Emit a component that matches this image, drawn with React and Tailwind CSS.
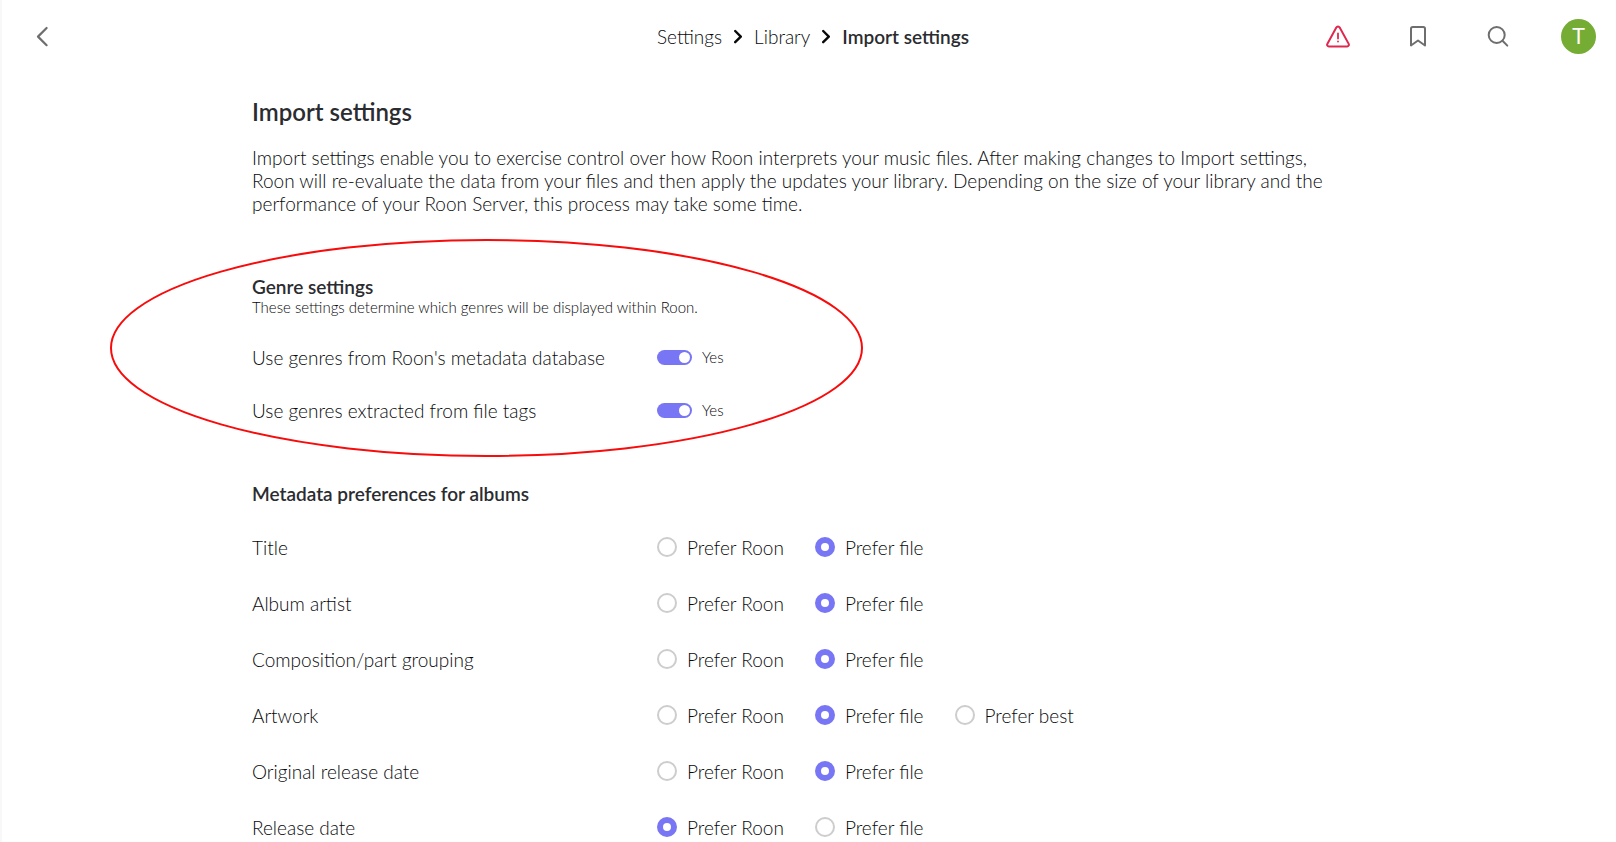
import { useState } from "react";

const ALBUM_FIELDS = [
  { id: "title", label: "Title", value: "file" },
  { id: "album-artist", label: "Album artist", value: "file" },
  { id: "grouping", label: "Composition/part grouping", value: "file" },
  { id: "artwork", label: "Artwork", value: "file", best: true },
  { id: "original-date", label: "Original release date", value: "file" },
  { id: "release-date", label: "Release date", value: "roon" },
];

function Chevron() {
  return (
    <svg className="h-4 w-2 shrink-0" viewBox="0 0 8 16" fill="none" stroke="currentColor" strokeWidth="2.4" strokeLinecap="round" strokeLinejoin="round" aria-hidden="true">
      <path d="M1.2 2 6.8 7.6 1.2 13.2" />
    </svg>
  );
}

function Header() {
  return (
    <header className="grid h-[73px] shrink-0 grid-cols-[1fr_auto_1fr] items-center pr-5 pl-7">
      <button type="button" aria-label="Back" className="flex size-7 items-center justify-center text-[#6e6e6e]">
        <svg className="size-7" viewBox="0 0 28 28" fill="none" stroke="currentColor" strokeWidth="2.2" strokeLinecap="round" strokeLinejoin="round" aria-hidden="true">
          <path d="M16.6 5 8 13.6l8.6 8.6" />
        </svg>
      </button>
      <nav aria-label="Breadcrumb" className="flex items-center gap-3 text-[19px] leading-6">
        <a href="#settings">Settings</a>
        <Chevron />
        <a href="#library">Library</a>
        <Chevron />
        <span aria-current="page" className="font-semibold text-[#2b2c30]">Import settings</span>
      </nav>
      <div className="flex items-center justify-end text-[#6e6e6e]">
        <button type="button" aria-label="Alerts" className="flex w-20 justify-center text-[#e0284f]">
          <svg className="size-6" viewBox="0 0 24 24" fill="none" stroke="currentColor" strokeWidth="2" strokeLinecap="round" strokeLinejoin="round" aria-hidden="true">
            <path d="M10.3 2.4 1.3 18.9a1.7 1.7 0 0 0 1.5 2.5h18.4a1.7 1.7 0 0 0 1.5-2.5L13.7 2.4a1.95 1.95 0 0 0-3.4 0Z" />
            <path d="M12 8.5v5M12 16.3v.2" strokeWidth="1.8" />
          </svg>
        </button>
        <button type="button" aria-label="Bookmarks" className="flex w-20 justify-center">
          <svg className="size-6" viewBox="0 0 24 24" fill="none" stroke="currentColor" strokeWidth="2" strokeLinecap="round" strokeLinejoin="round" aria-hidden="true">
            <path d="M5 20.5V3.8A1.8 1.8 0 0 1 6.8 2h10.4A1.8 1.8 0 0 1 19 3.8V20.5L12 15.5Z" />
          </svg>
        </button>
        <button type="button" aria-label="Search" className="flex w-20 justify-center">
          <svg className="size-6" viewBox="0 0 24 24" fill="none" stroke="currentColor" strokeWidth="2" strokeLinecap="round" aria-hidden="true">
            <circle cx="10.7" cy="10" r="8" />
            <path d="m16.5 15.8 4.8 4.8" />
          </svg>
        </button>
        <button type="button" aria-label="Profile" className="ml-[23px] flex size-[35px] items-center justify-center rounded-full bg-[#75ac34] font-[Roboto,sans-serif] text-[22px] leading-6 font-normal text-white">
          T
        </button>
      </div>
    </header>
  );
}

function ToggleRow({ id, label }) {
  const [on, setOn] = useState(true);
  return (
    <div className="flex h-[53px] items-center">
      <label htmlFor={id} className="w-[405px] shrink-0">{label}</label>
      <input
        id={id}
        type="checkbox"
        role="switch"
        checked={on}
        onChange={(e) => setOn(e.target.checked)}
        className="flex h-[15px] w-[35px] shrink-0 appearance-none items-center rounded-full bg-[#c8c8c8] px-[2px] before:size-[11px] before:rounded-full before:bg-white checked:justify-end checked:bg-[#7876f4]"
      />
      <span className="ml-[10px] text-[15px]">{on ? "Yes" : "No"}</span>
    </div>
  );
}

function PreferenceRow({ field }) {
  const [value, setValue] = useState(field.value);
  const options = [["roon", "Prefer Roon"], ["file", "Prefer file"]];
  if (field.best) options.push(["best", "Prefer best"]);
  return (
    <div role="radiogroup" aria-labelledby={field.id} className="flex h-14 items-center">
      <span id={field.id} className="w-[405px] shrink-0">{field.label}</span>
      <div className="flex items-center gap-[31px]">
        {options.map(([key, text]) => (
          <label key={key} className="flex items-center gap-[10px]">
            <input
              type="radio"
              name={field.id}
              checked={value === key}
              onChange={() => setValue(key)}
              className="size-5 shrink-0 appearance-none rounded-full border-2 border-[#cdcdcd] bg-white checked:border-6 checked:border-[#7876f4]"
            />
            {text}
          </label>
        ))}
      </div>
    </div>
  );
}

export default function App() {
  return (
    <div className="flex h-screen flex-col overflow-hidden border-l-2 border-[#f8f8f8] bg-white font-[Lato,sans-serif] text-[19px] leading-[23px] font-light text-[#08090b]">
      <Header />
      <main className="min-h-0 flex-1 overflow-y-auto [scrollbar-width:none]">
        <div className="mx-auto w-full max-w-[1114px] pt-6">
          <h1 className="text-2xl leading-[30px] font-semibold text-[#2b2c30]">Import settings</h1>
          <p className="mt-[19px] max-w-[1090px]">
            Import settings enable you to exercise control over how Roon interprets your music files. After making
            changes to Import settings, Roon will re-evaluate the data from your files and then apply the updates your
            library. Depending on the size of your library and the performance of your Roon Server, this process may
            take some time.
          </p>

          <section className="relative mt-[60px]">
            <h2 className="font-semibold text-[#2b2c30]">Genre settings</h2>
            <p className="text-[15px] leading-[18px]">These settings determine which genres will be displayed within Roon.</p>
            <div className="mt-[15px]">
              <ToggleRow id="roon-genres" label="Use genres from Roon's metadata database" />
              <ToggleRow id="file-genres" label="Use genres extracted from file tags" />
            </div>
            <svg className="pointer-events-none absolute -top-[36px] -left-[142px] h-[218px] w-[754px]" viewBox="0 0 754 218" fill="none" aria-hidden="true">
              <ellipse cx="376.5" cy="109" rx="375.5" ry="108" stroke="#f80b0b" strokeWidth="2" />
            </svg>
          </section>

          <section className="mt-[45px]">
            <h2 className="font-semibold text-[#2b2c30]">Metadata preferences for albums</h2>
            <div className="mt-[14px]">
              {ALBUM_FIELDS.map((field) => (
                <PreferenceRow key={field.id} field={field} />
              ))}
            </div>
          </section>
        </div>
      </main>
    </div>
  );
}
